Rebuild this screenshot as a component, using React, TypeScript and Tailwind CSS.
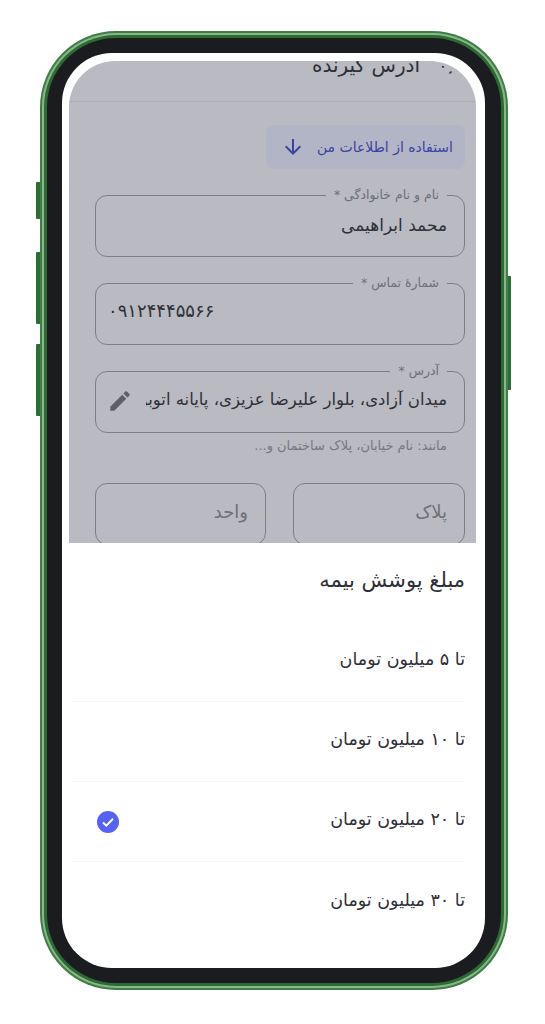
import { ReactNode } from "react";

const options = [
  { label: "تا ۵ میلیون تومان" },
  { label: "تا ۱۰ میلیون تومان" },
  { label: "تا ۲۰ میلیون تومان", selected: true },
  { label: "تا ۳۰ میلیون تومان" },
];

function Field({ label, children }: { label: string; children: ReactNode }) {
  return (
    <fieldset className="mt-[19px] h-[69px] min-w-0 rounded-xl border border-[#7d7e85] pl-[12px] pr-[17px]">
      <legend className="px-[8px] text-[12.5px] leading-[14px] text-[#6f7076]">{label}</legend>
      {children}
    </fieldset>
  );
}

function SideButton({ className }: { className: string }) {
  return <div className={`absolute w-[5px] bg-[#2f6d36] ${className}`} />;
}

export default function App() {
  return (
    <div className="h-[1024px] w-[545px] overflow-hidden bg-white pl-[40px] pt-[31px] font-['DejaVu_Sans',sans-serif]">
      <div className="relative h-[959px] w-[468px]">
        <SideButton className="left-[-4px] top-[151px] h-[37px] rounded-l-[1px]" />
        <SideButton className="left-[-4px] top-[221px] h-[72px] rounded-l-[1px]" />
        <SideButton className="left-[-4px] top-[313px] h-[72px] rounded-l-[1px]" />
        <SideButton className="right-[-3px] top-[245px] h-[114px] rounded-r-[1px]" />

        {/* Phone frame */}
        <div className="relative h-full rounded-[76px] bg-[#3f7f45] p-[2px]">
          <div className="h-full rounded-[74px] bg-[#8ab68c] p-[2px]">
            <div className="h-full rounded-[72px] bg-[#2e6b34] p-[3px]">
              <div className="h-full rounded-[69px] bg-[#1b1c20] pb-[15px] pl-[15px] pr-[16px] pt-[15px]">
                {/* Screen */}
                <div dir="rtl" className="flex h-full flex-col overflow-hidden rounded-[50px] bg-white">
                  <div className="pl-[7px] pr-[9px] pt-[8px]">
                    <div className="relative h-[482px] overflow-hidden rounded-t-[46px] bg-[#b9bac2]">
                      {/* Clipped page header */}
                      <div className="-mt-[8px] flex h-[49px] items-end border-b border-[#aeafb7] pb-[23px] pr-[56px] text-[20px] leading-[26px] text-[#2f3037]">
                        آدرس گیرنده
                      </div>
                      <svg viewBox="0 0 12 12" className="absolute left-[372px] top-[4px] h-[12px] w-[12px]">
                        <path d="M1 1.5l2 .7M8.5 8.5l2-2" fill="none" stroke="#2f3037" strokeWidth="1.6" />
                      </svg>

                      <div className="pl-[26px] pr-[11px] pt-[23px]">
                        <button className="flex h-[44px] w-[199px] items-center gap-[12px] rounded-lg bg-[#b2b5c6] pr-[12px] text-[14px] text-[#3c43a0]">
                          <span>استفاده از اطلاعات من</span>
                          <svg viewBox="0 0 24 24" className="h-[24px] w-[24px] fill-[#3c43a0]">
                            <path d="M20 12l-1.41-1.41L13 16.17V4h-2v12.17l-5.58-5.59L4 12l8 8 8-8z" />
                          </svg>
                        </button>

                        <Field label="نام و نام خانوادگی *">
                          <div className="pt-[11px] text-[17px] leading-[24px] text-[#2f3037]">محمد ابراهیمی</div>
                        </Field>

                        <Field label="شمارهٔ تماس *">
                          <div dir="ltr" className="pt-[9px] text-[18px] leading-[24px] text-[#2f3037]">۰۹۱۲۴۴۴۵۵۶۶</div>
                        </Field>

                        <Field label="آدرس *">
                          <div className="flex items-center justify-between gap-[13px] pt-[8px]">
                            <div className="min-w-0 flex-1 overflow-hidden whitespace-nowrap text-[16.5px] leading-[24px] text-[#2f3037]">
                              میدان آزادی، بلوار علیرضا عزیزی، پایانه اتوبوس
                            </div>
                            <svg viewBox="0 0 24 24" className="ml-[-1px] mt-[2px] h-[26px] w-[26px] shrink-0 fill-[#5f6066]">
                              <path d="M3 17.25V21h3.75L17.81 9.94l-3.75-3.75L3 17.25zM20.71 7.04c.39-.39.39-1.02 0-1.41l-2.34-2.34a.9959.9959 0 0 0-1.41 0l-1.83 1.83 3.75 3.75 1.83-1.83z" />
                            </svg>
                          </div>
                        </Field>
                        <p className="pr-[18px] pt-[5px] text-[13px] leading-[16px] text-[#77787e]">
                          مانند: نام خیابان، پلاک ساختمان و...
                        </p>

                        <div className="mt-[29px] flex gap-[27px]">
                          <div className="h-[62px] w-[172px] rounded-xl border border-[#7d7e85] pr-[17px] pt-[15px] text-[18px] leading-[26px] text-[#6f7076]">
                            پلاک
                          </div>
                          <div className="h-[62px] flex-1 rounded-xl border border-[#7d7e85] pr-[17px] pt-[15px] text-[18px] leading-[26px] text-[#6f7076]">
                            واحد
                          </div>
                        </div>
                      </div>
                    </div>
                  </div>

                  {/* Bottom sheet */}
                  <div className="pl-[10px] pr-[20px]">
                    <h2 className="pt-[23px] text-[21px] font-normal leading-[28px] text-[#2f3037]">مبلغ پوشش بیمه</h2>
                    <ul className="pt-[28px]">
                      {options.map((option) => (
                        <li
                          key={option.label}
                          className="flex h-[80px] items-center justify-between border-b border-[#f5f5f6] last:border-b-0"
                        >
                          <span className="-mt-[4px] text-[17.5px] text-[#2f3037]">{option.label}</span>
                          {option.selected && (
                            <svg viewBox="0 0 22 22" className="ml-[25px] h-[22px] w-[22px]">
                              <circle cx="11" cy="11" r="11" fill="#5661f6" />
                              <path d="M6 11.5l3.4 3.2L16 7.8" fill="none" stroke="#fff" strokeWidth="2" />
                            </svg>
                          )}
                        </li>
                      ))}
                    </ul>
                  </div>
                </div>
              </div>
            </div>
          </div>
        </div>
      </div>
    </div>
  );
}
